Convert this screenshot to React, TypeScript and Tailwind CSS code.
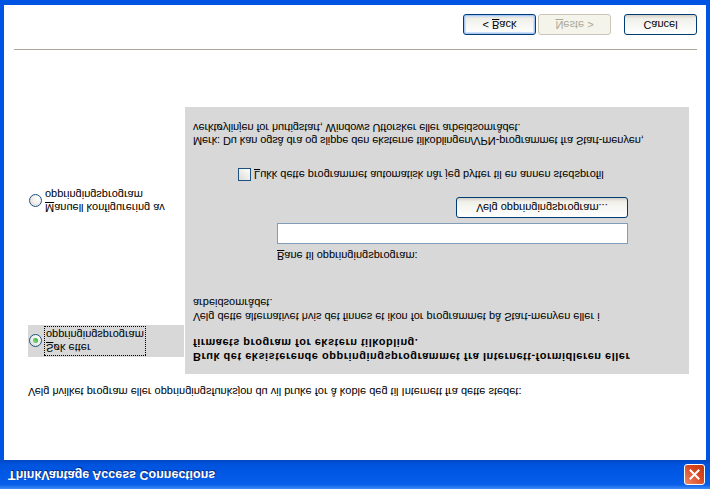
import React from "react";

function Radio({ checked }: { checked?: boolean }) {
  return (
    <span className="relative flex h-[13px] w-[13px] shrink-0 items-center justify-center rounded-full border border-[#1c5180] bg-[radial-gradient(circle_at_70%_70%,#ffffff,#dcdad5)]">
      {checked && (
        <span className="h-[5px] w-[5px] rounded-full bg-[radial-gradient(circle_at_35%_35%,#7fe07f,#21a121)]" />
      )}
    </span>
  );
}

function XpButton({
  children,
  disabled,
  focused,
  className = "",
}: {
  children: React.ReactNode;
  disabled?: boolean;
  focused?: boolean;
  className?: string;
}) {
  if (disabled) {
    return (
      <div
        className={`flex h-[21px] items-center justify-center rounded-[3px] border border-[#c9c7ba] bg-[#f5f4ea] text-[#aca899] ${className}`}
      >
        {children}
      </div>
    );
  }
  return (
    <div
      className={`flex h-[21px] items-center justify-center rounded-[3px] border border-[#003c74] bg-[linear-gradient(to_bottom,#ffffff,#f0f0ea_80%,#d6d0c5)] text-black ${
        focused ? "shadow-[inset_0_0_0_1px_#a6c6f6,inset_0_0_0_2px_#cddff9]" : ""
      } ${className}`}
    >
      {children}
    </div>
  );
}

export default function App() {
  return (
    <div className="h-[489px] w-[710px] -scale-y-100 overflow-hidden bg-[#0054e3] font-['Liberation_Sans',Arial,sans-serif] text-[11px] leading-[13px] text-black">
      <div className="flex h-full flex-col">
        {/* title bar */}
        <div className="flex h-[29px] shrink-0 items-center justify-between bg-[linear-gradient(to_bottom,#3d8cf6,#0a5fe8_15%,#0058e6_50%,#0053dd_85%,#0046c2)] pl-[8px] pr-[5px]">
          <span className="text-[12.5px] font-bold text-white [text-shadow:1px_1px_0_#0a2a78]">
            ThinkVantage Access Connections
          </span>
          <div className="flex h-[21px] w-[21px] items-center justify-center rounded-[3px] border border-white bg-[linear-gradient(135deg,#f08a68,#d8451f_60%,#c23a12)]">
            <svg width="11" height="11" viewBox="0 0 11 11">
              <path d="M1.5 1.5 L9.5 9.5 M9.5 1.5 L1.5 9.5" stroke="white" strokeWidth="2" strokeLinecap="square" />
            </svg>
          </div>
        </div>

        {/* client area */}
        <div className="mx-[4px] mb-[5px] flex flex-1 flex-col bg-white">
          <div className="pl-[24px] pt-[62px]">
            Velg hvilket program eller oppringingsfunksjon du vil bruke for å koble deg til Internett fra dette stedet:
          </div>

          <div className="mt-[11px] flex pl-[24px]">
            <div className="flex w-[156px] flex-col">
              <div className="mt-[17px] flex h-[32px] items-center gap-[2px] bg-[#d8d8d8] pl-[1px]">
                <Radio checked />
                <div className="border border-dotted border-black px-[1px] py-[1px] leading-[13px]">
                  <div>
                    <span className="underline">S</span>øk etter
                  </div>
                  <div>oppringingsprogram</div>
                </div>
              </div>
              <div className="mt-[111px] flex items-center gap-[3px] pl-[1px]">
                <Radio />
                <div className="leading-[13px]">
                  <div>
                    <span className="underline">M</span>anuell konfigurering av
                  </div>
                  <div>oppringingsprogram</div>
                </div>
              </div>
            </div>

            <div className="ml-[1px] h-[267px] w-[504px] bg-[#d8d8d8] pl-[8px] pt-[10px]">
              <div className="font-bold leading-[14px] tracking-[0.5px]">
                <div>Bruk det eksisterende oppringingsprogrammet fra Internett-formidleren eller</div>
                <div>firmaets program for ekstern tilkobling.</div>
              </div>
              <div className="mt-[12px] leading-[14px]">
                <div>Velg dette alternativet hvis det finnes et ikon for programmet på Start-menyen eller i</div>
                <div>arbeidsområdet.</div>
              </div>
              <div className="ml-[84px] mt-[34px] w-[351px]">
                <div>
                  <span className="underline">B</span>ane til oppringingsprogram:
                </div>
                <div className="mt-[5px] h-[21px] border border-[#7f9db9] bg-white" />
                <div className="mt-[5px] flex justify-end">
                  <XpButton className="w-[172px]">Velg oppringingsprogram...</XpButton>
                </div>
              </div>
              <div className="ml-[45px] mt-[16px] flex items-center gap-[3px]">
                <span className="h-[13px] w-[13px] border border-[#1c5180] bg-[linear-gradient(135deg,#dcdcd7,#ffffff)]" />
                <span>
                  <span className="underline">L</span>ukk dette programmet automatisk når jeg bytter til en annen stedsprofil
                </span>
              </div>
              <div className="mt-[21px] leading-[13px] tracking-[-0.1px]">
                <div>Merk: Du kan også dra og slippe den eksterne tilkoblingen/VPN-programmet fra Start-menyen,</div>
                <div>verktøylinjen for hurtigstart, Windows Utforsker eller arbeidsområdet.</div>
              </div>
            </div>
          </div>

          <div className="mt-auto">
            <div className="ml-[10px] mr-[9px] h-[2px] border-t border-t-[#aca899] border-b border-b-white" />
            <div className="mb-[9px] mt-[13px] flex justify-end pr-[9px]">
              <XpButton focused className="w-[73px]">
                &lt; <span className="ml-[3px] underline">B</span>ack
              </XpButton>
              <XpButton disabled className="ml-[2px] w-[73px]">
                <span className="underline">N</span>este &gt;
              </XpButton>
              <XpButton className="ml-[13px] w-[73px]">Cancel</XpButton>
            </div>
          </div>
        </div>
      </div>
    </div>
  );
}
